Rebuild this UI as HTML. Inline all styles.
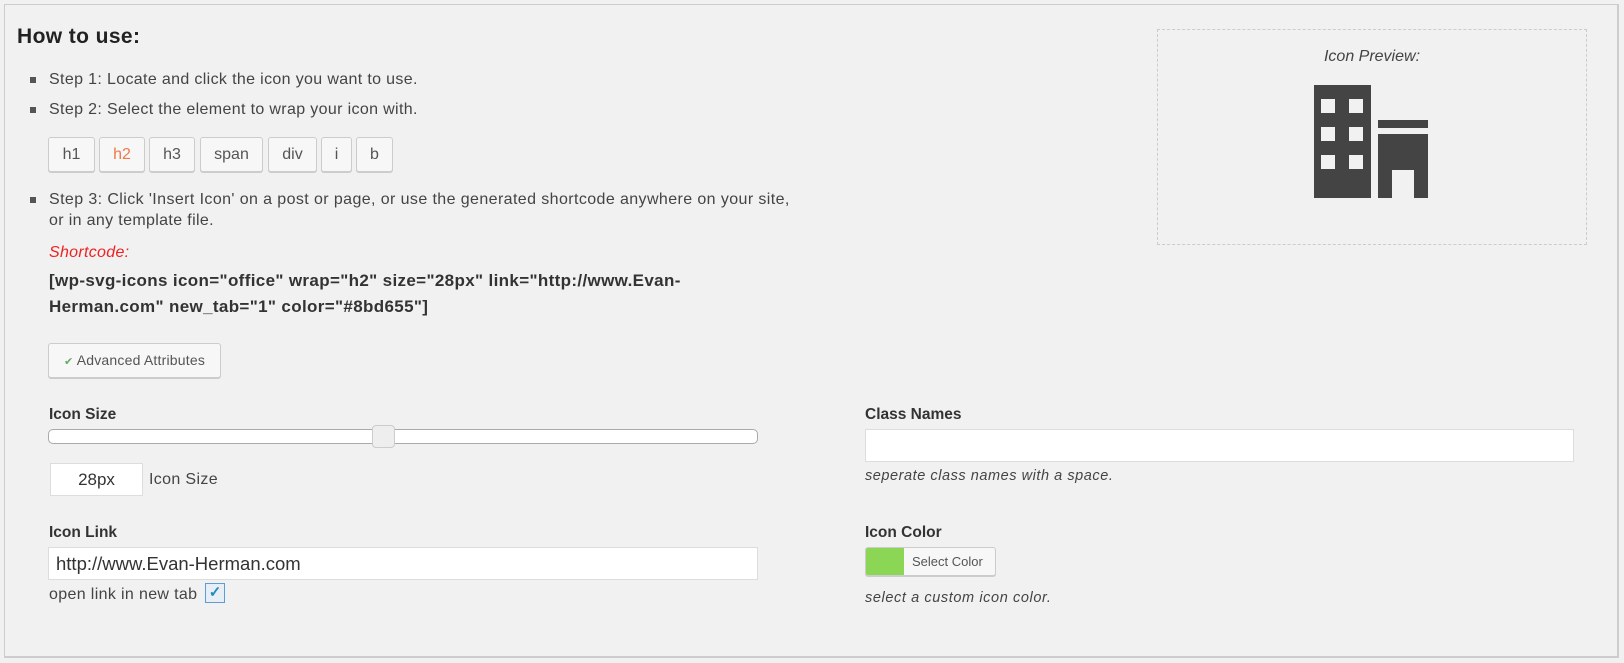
<!DOCTYPE html>
<html><head><meta charset="utf-8"><style>
*{box-sizing:border-box;margin:0;padding:0}
body{width:1624px;height:663px;background:#f1f1f1;font-family:"Liberation Sans",Arial,sans-serif;color:#444;position:relative;overflow:hidden}
.a{position:absolute;white-space:nowrap}
.box{position:absolute;left:4px;top:4px;width:1615px;height:654px;border:1px solid #ccc;border-width:1px 2px 2px 1px}
.t{font-size:16px;color:#444;letter-spacing:0.35px}
.b{font-weight:bold;font-size:15.5px;color:#333}
.btn{position:absolute;top:137px;height:35px;border:1px solid #ccc;border-radius:3px;background:#f7f7f7;box-shadow:0 1px 0 #ccc;font-size:16px;color:#555;text-align:center;line-height:33px}
.bul{position:absolute;left:30px;width:6px;height:6px;background:#555}
input{position:absolute;background:#fff;border:1px solid #ddd;font-family:inherit}
</style></head><body>
<div class="box"></div>
<div class="a" style="left:17px;top:25px;font-size:21px;font-weight:bold;color:#222;letter-spacing:0.4px">How to use:</div>
<div class="bul" style="top:77px"></div><div class="a t" style="left:49px;top:71px">Step 1: Locate and click the icon you want to use.</div>
<div class="bul" style="top:107px"></div><div class="a t" style="left:49px;top:101px">Step 2: Select the element to wrap your icon with.</div>
<div class="btn" style="left:48px;width:47px">h1</div>
<div class="btn" style="left:99px;width:46px;color:#f0784a">h2</div>
<div class="btn" style="left:149px;width:46px">h3</div>
<div class="btn" style="left:200px;width:63px">span</div>
<div class="btn" style="left:268px;width:49px">div</div>
<div class="btn" style="left:321px;width:31px">i</div>
<div class="btn" style="left:356px;width:37px">b</div>
<div class="bul" style="top:197px"></div>
<div class="a t" style="left:49px;top:191px;letter-spacing:0.4px">Step 3: Click 'Insert Icon' on a post or page, or use the generated shortcode anywhere on your site,</div>
<div class="a t" style="left:49px;top:212px">or in any template file.</div>
<div class="a" style="left:49px;top:244px;font-size:16px;font-style:italic;color:#e22;letter-spacing:0.3px">Shortcode:</div>
<div class="a" style="left:49px;top:271px;font-size:17px;font-weight:bold;color:#333;letter-spacing:0.35px">[wp-svg-icons icon="office" wrap="h2" size="28px" link="http://www.Evan-</div>
<div class="a" style="left:49px;top:297px;font-size:17px;font-weight:bold;color:#333;letter-spacing:0.35px">Herman.com" new_tab="1" color="#8bd655"]</div>

<div class="a" style="left:1157px;top:29px;width:430px;height:216px;border:1px dashed #ccc"></div>
<div class="a" style="left:1157px;top:48px;width:430px;text-align:center;font-size:16px;font-style:italic;color:#444">Icon Preview:</div>
<svg class="a" style="left:1314px;top:85px" width="116" height="114" viewBox="0 0 116 114">
<path fill="#444" fill-rule="evenodd" d="M0 0H57V113H0Z M7 14V28H21V14Z M35 14V28H49V14Z M7 42V56H21V42Z M35 42V56H49V42Z M7 70V84H21V70Z M35 70V84H49V70Z"/>
<rect x="64" y="35" width="50" height="8" fill="#444"/>
<path fill="#444" d="M64 49H114V113H100V85H78V113H64Z"/>
</svg>

<div class="btn" style="left:48px;top:343px;width:173px;height:35px;font-size:14px;line-height:33px;color:#555;letter-spacing:0.2px"><span style="color:#6a6;font-size:11px">✔</span> Advanced Attributes</div>

<div class="a b" style="left:49px;top:406px">Icon Size</div>
<div class="a" style="left:48px;top:429px;width:710px;height:15px;background:#fff;border:1px solid #aaa;border-radius:5px"></div>
<div class="a" style="left:372px;top:425px;width:23px;height:23px;background:#eee;border:1px solid #ccc;border-radius:4px"></div>
<input style="left:50px;top:463px;width:93px;height:33px;font-size:17px;text-align:center;color:#333" value="28px">
<div class="a t" style="left:149px;top:471px">Icon Size</div>

<div class="a b" style="left:49px;top:524px">Icon Link</div>
<input style="left:48px;top:547px;width:710px;height:33px;font-size:18.5px;padding-left:7px;color:#333" value="http://www.Evan-Herman.com">
<div class="a t" style="left:49px;top:586px">open link in new tab</div>
<div class="a" style="left:205px;top:583px;width:20px;height:20px;border:1px solid #5b9dd9;background:#e8eef5;color:#1e8cbe;font-size:15px;line-height:18px;text-align:center;font-weight:bold">✓</div>

<div class="a b" style="left:865px;top:406px">Class Names</div>
<input style="left:865px;top:429px;width:709px;height:33px">
<div class="a" style="left:865px;top:468px;font-size:14.5px;font-style:italic;color:#444;letter-spacing:0.55px">seperate class names with a space.</div>

<div class="a b" style="left:865px;top:524px">Icon Color</div>
<div class="a" style="left:865px;top:547px;width:131px;height:29px;border:1px solid #ccc;border-radius:3px;background:#f7f7f7;box-shadow:0 1px 0 #ccc;overflow:hidden">
<div style="position:absolute;left:0;top:0;width:38px;height:29px;background:#8bd655"></div>
<div style="position:absolute;left:46px;top:6px;font-size:13px;color:#555">Select Color</div></div>
<div class="a" style="left:865px;top:590px;font-size:14.5px;font-style:italic;color:#444;letter-spacing:0.6px">select a custom icon color.</div>
</body></html>
